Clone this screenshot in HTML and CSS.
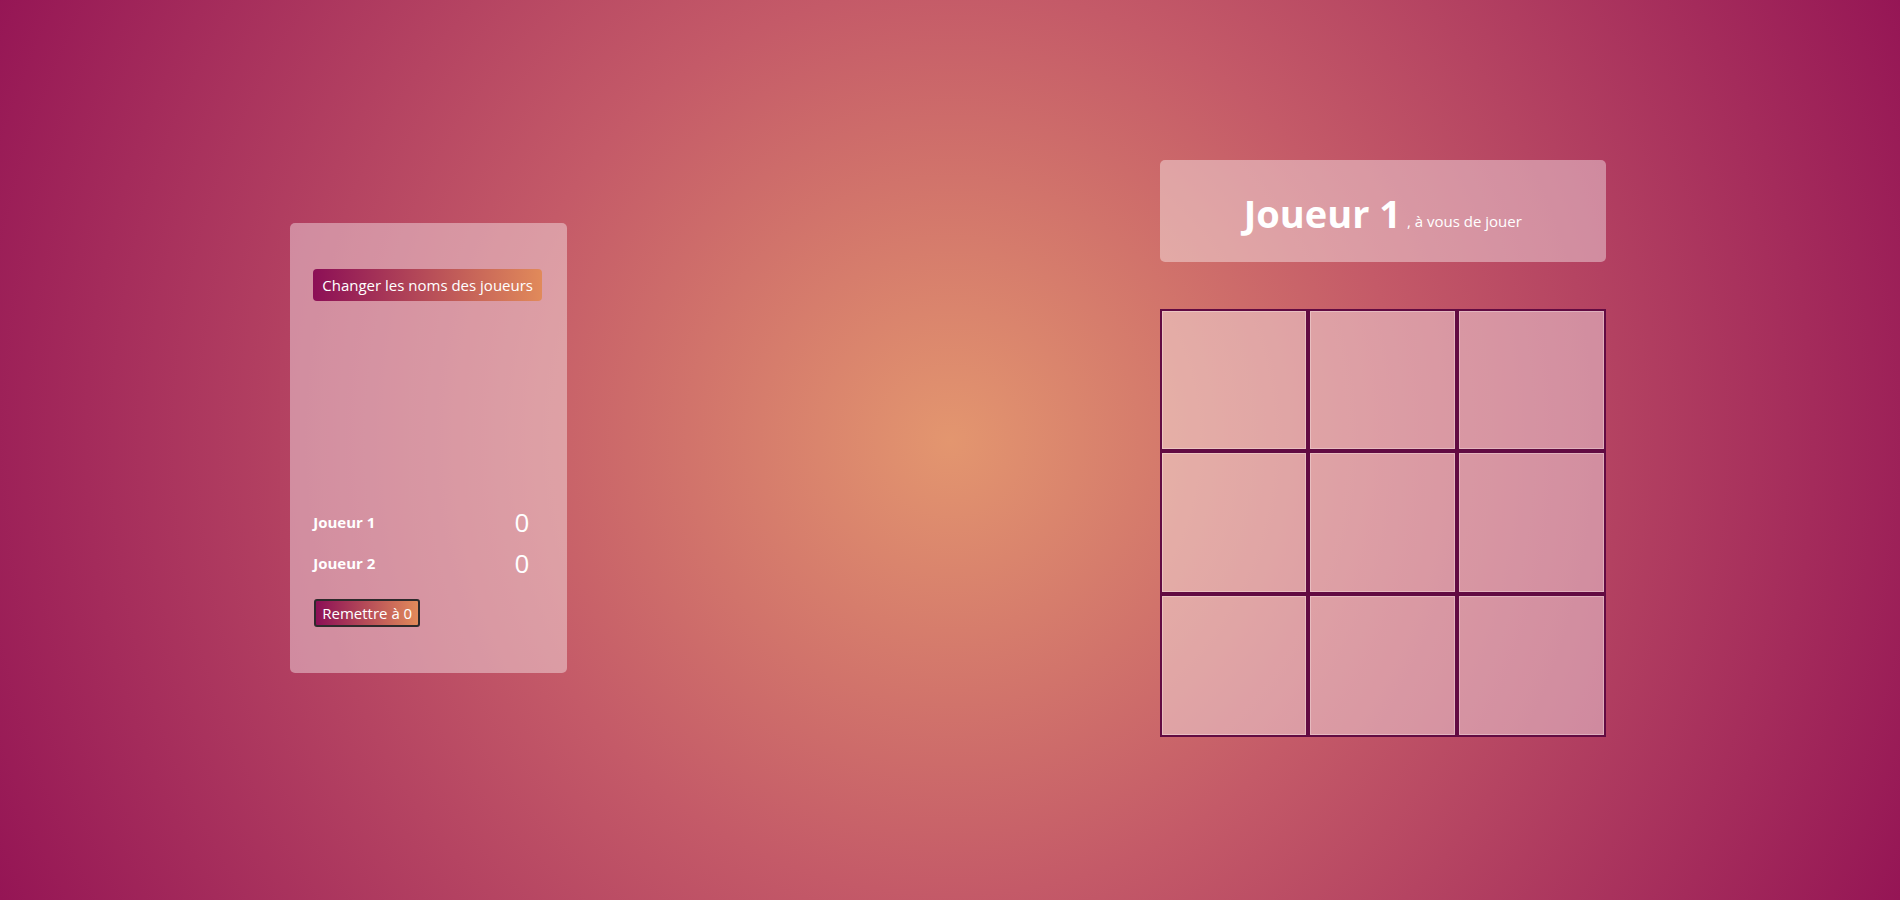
FILE: index.html
```html
<!DOCTYPE html>
<html lang="fr">
<head>
<meta charset="UTF-8" />
<meta name="viewport" content="width=device-width, initial-scale=1" />
<title>Morpion</title>
<link rel="stylesheet" href="styles.css">
</head>
<body>

<main class="page">
  <!-- Panneau des scores -->
  <aside class="panel">
    <button class="btn btn-names">Changer les noms des joueurs</button>

    <div class="scores">
      <div class="score-row">
        <span class="score-name">Joueur 1</span>
        <span class="score-value">0</span>
      </div>
      <div class="score-row">
        <span class="score-name">Joueur 2</span>
        <span class="score-value">0</span>
      </div>
    </div>

    <button class="btn btn-reset">Remettre à 0</button>
  </aside>

  <!-- Plateau de jeu -->
  <section class="game">
    <div class="turn">
      <span class="turn-name">Joueur 1</span>
      <span class="turn-text">, à vous de jouer</span>
    </div>

    <div class="board">
      <div class="cell"></div><div class="cell"></div><div class="cell"></div>
      <div class="cell"></div><div class="cell"></div><div class="cell"></div>
      <div class="cell"></div><div class="cell"></div><div class="cell"></div>
    </div>
  </section>
</main>

</body>
</html>
```

FILE: styles.css
```css
/* Reset */
* {
  margin: 0; padding: 0; box-sizing: border-box;
}
html, body {
  height: 100%;
}
body {
  font-family: 'Open Sans', 'Noto Sans', sans-serif;
  color: #fff;
  background: radial-gradient(circle farthest-corner at 50% 49%, #e3966f 0%, #c45a68 43%, #951555 100%);
  overflow: hidden;
}

/* Mise en page */
.page {
  height: 100%;
  padding-bottom: 4px;
  display: flex;
  align-items: center;
  justify-content: space-around;
}

/* Panneau vitre */
.panel,
.turn {
  background: rgba(255, 255, 255, 0.4);
  border-radius: 5px;
}
.panel {
  width: 277px;
  height: 450px;
  margin: 0 4px 0 -4px;
  padding: 46px 23px;
  display: flex;
  flex-direction: column;
  align-items: flex-start;
}

/* Boutons */
.btn {
  font-family: inherit;
  color: #fff;
  background: linear-gradient(90deg, #8c0f56, #e18a5a);
  cursor: pointer;
}
.btn-names {
  height: 32px;
  padding: 0 9px;
  font-size: 15px;
  border: none;
  border-radius: 4px;
}
.btn-reset {
  height: 28px;
  margin: 19px 0 0 1px;
  padding: 0 6px;
  font-size: 15px;
  border: 2px solid #2e2a2c;
  border-radius: 3px;
}

/* Scores */
.scores {
  margin-top: 204px;
  width: 216px;
}
.score-row {
  height: 34px;
  display: flex;
  align-items: center;
  justify-content: space-between;
}
.score-row + .score-row {
  margin-top: 7px;
}
.score-name {
  font-size: 15px;
  font-weight: 700;
}
.score-value {
  font-size: 26px;
  font-weight: 400;
}

/* Jeu */
.game {
  width: 446px;
  display: flex;
  flex-direction: column;
  gap: 47px;
}
.turn {
  height: 102px;
  display: flex;
  align-items: center;
  justify-content: center;
  gap: 6px;
  padding-top: 4px;
}
.turn-name {
  font-size: 38px;
  font-weight: 700;
}
.turn-text {
  font-size: 15px;
  margin-top: 16px;
}

/* Plateau */
.board {
  height: 428px;
  display: grid;
  grid-template-columns: repeat(3, 1fr);
  grid-template-rows: repeat(3, 1fr);
  background: rgba(255, 255, 255, 0.4);
}
.cell {
  border: 2px solid #620b42;
  box-shadow: inset 0 0 0 1px rgba(255, 255, 255, 0.3);
  cursor: pointer;
}
```
